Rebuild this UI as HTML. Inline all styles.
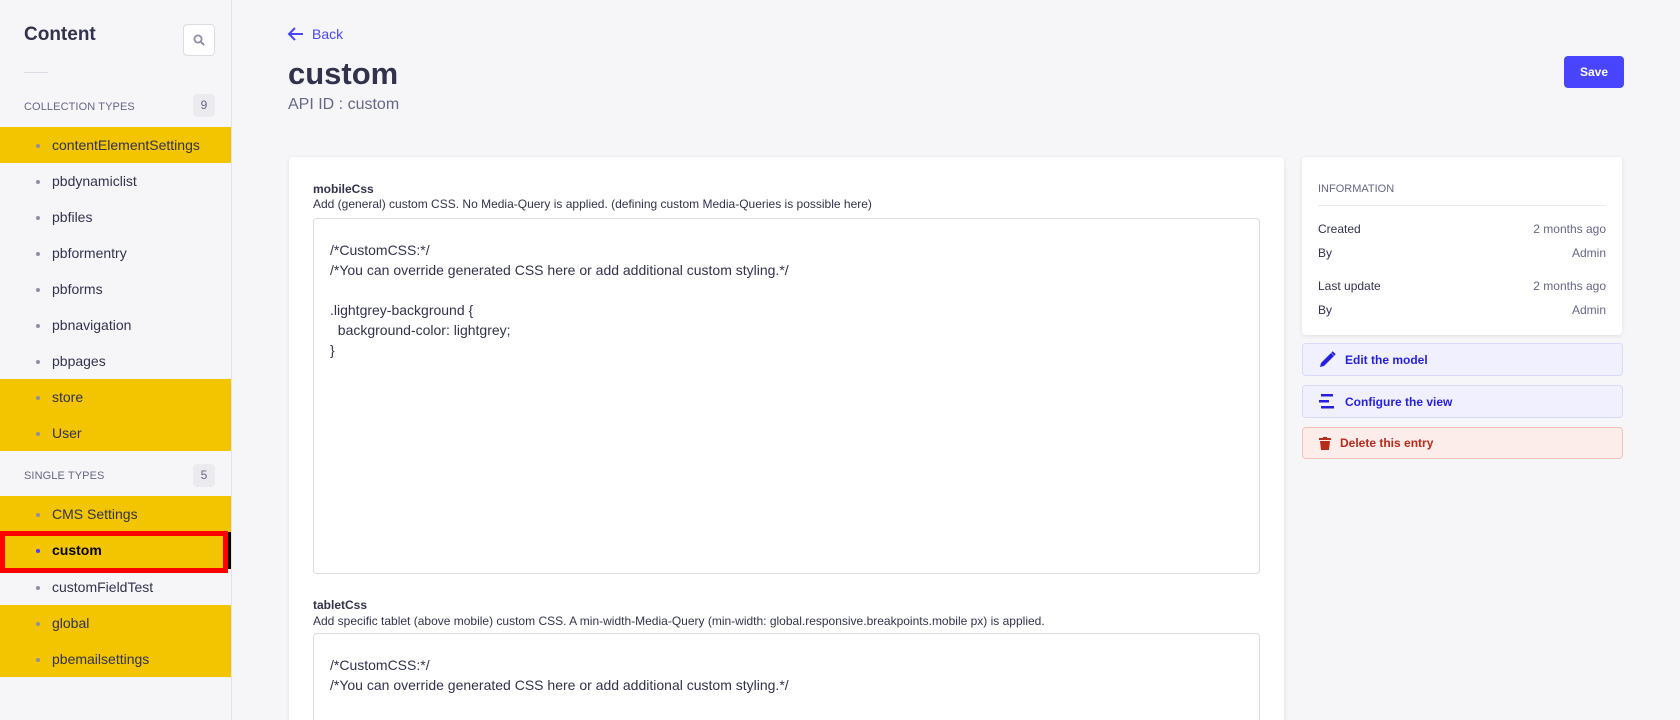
<!DOCTYPE html>
<html style="height:720px;overflow:hidden"><head><meta charset="utf-8"><style>
*{box-sizing:border-box;margin:0;padding:0}
body{width:1680px;height:720px;overflow:hidden;background:#f6f6f9;font-family:"Liberation Sans",sans-serif;color:#32324d;position:relative}
.abs{position:absolute}
.side{left:0;top:0;width:232px;height:720px;background:#f6f6f9;border-right:1px solid #e3e3ea}
.item{position:absolute;left:0;width:231px;height:36px;font-size:14px;line-height:36px;padding-left:52px;color:#32324d}
.item.y{background:#f3c400}
.item::before{content:"";position:absolute;left:36px;top:17px;width:4px;height:4px;border-radius:2px;background:#8e8ea9}
.sec{position:absolute;left:24px;font-size:11px;color:#666687;letter-spacing:.1px}
.badge{position:absolute;left:193px;width:22px;height:23px;border-radius:4px;background:#eaeaef;font-size:12px;color:#666687;text-align:center;line-height:23px}
.card{background:#fff;border-radius:4px;box-shadow:0 1px 4px rgba(33,33,52,.1)}
.lbl{font-size:12px;font-weight:bold;color:#32324d}
.desc{font-size:12px;color:#32324d}
.ta{border:1px solid #dcdce4;border-radius:4px;background:#fff;padding:21px 16px;font-size:14px;line-height:20px;color:#32324d;white-space:pre}
.row{position:absolute;left:1318px;width:288px;font-size:12px;display:flex;justify-content:space-between}
.row span:last-child{color:#666687}
.btn{position:absolute;left:1302px;width:321px;border-radius:4px;font-size:12px;font-weight:bold;display:flex;align-items:center}
</style></head><body>
<div class="abs side">
  <div class="abs" style="left:24px;top:24px;font-size:19px;font-weight:bold;color:#32324d">Content</div>
  <div class="abs" style="left:183px;top:24px;width:32px;height:32px;background:#fff;border:1px solid #dcdce4;border-radius:4px">
    <svg width="30" height="30" viewBox="0 0 30 30"><circle cx="14" cy="14" r="3.6" fill="none" stroke="#8e8ea9" stroke-width="1.8"/><path d="M16.6 16.6l3 3" stroke="#8e8ea9" stroke-width="2" stroke-linecap="round"/></svg>
  </div>
  <div class="abs" style="left:24px;top:72px;width:24px;height:1px;background:#dcdce4"></div>
  <div class="sec" style="top:101px">COLLECTION TYPES</div>
  <div class="badge" style="top:94px">9</div>
  <div class="item y" style="top:127px">contentElementSettings</div>
  <div class="item" style="top:163px">pbdynamiclist</div>
  <div class="item" style="top:199px">pbfiles</div>
  <div class="item" style="top:235px">pbformentry</div>
  <div class="item" style="top:271px">pbforms</div>
  <div class="item" style="top:307px">pbnavigation</div>
  <div class="item" style="top:343px">pbpages</div>
  <div class="item y" style="top:379px">store</div>
  <div class="item y" style="top:415px">User</div>
  <div class="sec" style="top:470px">SINGLE TYPES</div>
  <div class="badge" style="top:464px">5</div>
  <div class="item y" style="top:496px">CMS Settings</div>
  <div class="item y" style="top:532px;font-weight:bold;color:#000">custom</div>
  <div class="abs" style="left:0;top:531px;width:228px;height:42px;border:5px solid #f00"></div>
  <div class="abs" style="left:228px;top:532px;width:3px;height:37px;background:#000"></div>
  <div class="abs" style="left:36px;top:549px;width:4px;height:4px;border-radius:2px;background:#4945ff"></div>
  <div class="item" style="top:569px">customFieldTest</div>
  <div class="item y" style="top:605px">global</div>
  <div class="item y" style="top:641px">pbemailsettings</div>
</div>

<svg class="abs" style="left:287px;top:26px" width="18" height="16" viewBox="0 0 18 16"><path d="M16 8H2M8 2L2 8l6 6" fill="none" stroke="#4945ff" stroke-width="2"/></svg>
<div class="abs" style="left:312px;top:26px;font-size:14px;color:#4945ff">Back</div>
<div class="abs" style="left:288px;top:56px;font-size:31px;font-weight:bold;color:#32324d">custom</div>
<div class="abs" style="left:288px;top:96px;font-size:16px;color:#666687">API ID : custom</div>
<div class="abs" style="left:1564px;top:56px;width:60px;height:32px;background:#4945ff;border-radius:4px;color:#fff;font-size:12px;font-weight:bold;text-align:center;line-height:32px">Save</div>

<div class="abs card" style="left:289px;top:157px;width:995px;height:570px"></div>
<div class="abs lbl" style="left:313px;top:182px">mobileCss</div>
<div class="abs desc" style="left:313px;top:197px">Add (general) custom CSS. No Media-Query is applied. (defining custom Media-Queries is possible here)</div>
<div class="abs ta" style="left:313px;top:218px;width:947px;height:356px">/*CustomCSS:*/
/*You can override generated CSS here or add additional custom styling.*/

.lightgrey-background {
  background-color: lightgrey;
}</div>
<div class="abs lbl" style="left:313px;top:598px">tabletCss</div>
<div class="abs desc" style="left:313px;top:614px">Add specific tablet (above mobile) custom CSS. A min-width-Media-Query (min-width: global.responsive.breakpoints.mobile px) is applied.</div>
<div class="abs ta" style="left:313px;top:633px;width:947px;height:100px">/*CustomCSS:*/
/*You can override generated CSS here or add additional custom styling.*/</div>

<div class="abs card" style="left:1302px;top:157px;width:320px;height:178px"></div>
<div class="abs" style="left:1318px;top:183px;font-size:11px;color:#666687">INFORMATION</div>
<div class="abs" style="left:1318px;top:205px;width:288px;height:1px;background:#eaeaef"></div>
<div class="row" style="top:222px"><span>Created</span><span>2 months ago</span></div>
<div class="row" style="top:246px"><span>By</span><span>Admin</span></div>
<div class="row" style="top:279px"><span>Last update</span><span>2 months ago</span></div>
<div class="row" style="top:303px"><span>By</span><span>Admin</span></div>

<div class="btn" style="top:343px;height:33px;background:#f0f0ff;border:1px solid #d9d8ff;color:#271fe0">
  <svg style="margin-left:16px;margin-right:9px" width="17" height="17" viewBox="0 0 17 17"><path d="M1 16l1-4L12 2l3 3L5 15z" fill="#271fe0"/><path d="M13 1l3 3" stroke="#271fe0" stroke-width="2"/></svg>Edit the model</div>
<div class="btn" style="top:385px;height:33px;background:#f0f0ff;border:1px solid #d9d8ff;color:#271fe0">
  <svg style="margin-left:16px;margin-right:9px" width="17" height="17" viewBox="0 0 17 17"><rect x="2" y="1" width="12" height="2.5" fill="#271fe0"/><rect x="0" y="7" width="10" height="2.5" fill="#271fe0"/><rect x="2" y="13" width="13" height="2.5" fill="#271fe0"/></svg>Configure the view</div>
<div class="btn" style="top:427px;height:32px;background:#fcecea;border:1px solid #f5c0b8;color:#b72b1a">
  <svg style="margin-left:16px;margin-right:9px" width="12" height="13" viewBox="0 0 12 13"><rect x="0" y="1" width="12" height="2" fill="#b72b1a"/><rect x="4" y="0" width="4" height="2" fill="#b72b1a"/><path d="M1 4h10l-1 9H2z" fill="#b72b1a"/></svg>Delete this entry</div>
</body></html>
